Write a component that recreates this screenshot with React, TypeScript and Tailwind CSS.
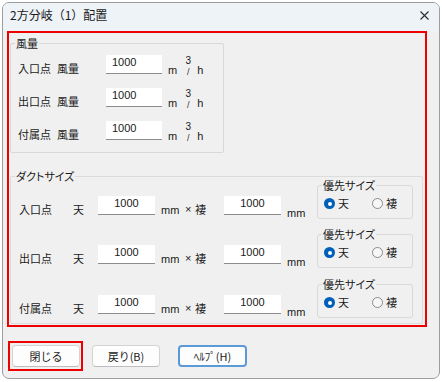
import React from "react";

const JP = "font-['Noto_Sans_CJK_JP',sans-serif]";
const LS = "font-['Liberation_Sans','Noto_Sans_CJK_JP',sans-serif]";
const PALT = "[font-feature-settings:'palt']";

function Radio({ checked }: { checked: boolean }) {
  if (checked) {
    return (
      <span className="w-[11px] h-[11px] rounded-full bg-[#005fb8] flex items-center justify-center shrink-0">
        <span className="w-[4px] h-[4px] rounded-full bg-white" />
      </span>
    );
  }
  return <span className="w-[11px] h-[11px] rounded-full border border-[#8a8a8a] bg-[#f7f7f7] shrink-0" />;
}

function Field({ value, center, className }: { value: string; center?: boolean; className?: string }) {
  return (
    <div
      className={`${LS} ${className ?? ""} h-[19px] bg-white border-b border-[#8c8c8c] text-[11px] leading-[15px] text-[#1a1a1a] ${
        center ? "text-center" : "pl-[6px]"
      }`}
    >
      {value}
    </div>
  );
}

function AirRow({ label }: { label: string }) {
  return (
    <div className="flex items-start h-[19px] pl-[7px] text-[#1a1a1a]">
      <span className={`${JP} w-[39px] mt-[6px] text-[11px] leading-[14px] shrink-0`}>{label}</span>
      <span className={`${JP} w-[49px] mt-[6px] text-[11px] leading-[14px] shrink-0`}>風量</span>
      <Field value="1000" className="w-[56px] shrink-0" />
      <span className={`${LS} ml-[6px] mt-[8px] text-[11px] leading-[14px]`}>m</span>
      <span className={`${LS} ml-[7px] mt-[1px] w-[8px] flex flex-col items-center`}>
        <span className="text-[10px] leading-[10px]">3</span>
        <span className="text-[9px] leading-[8px] mt-[2px] text-[#333333]">/</span>
      </span>
      <span className={`${LS} ml-[5px] mt-[8px] text-[11px] leading-[14px]`}>h</span>
    </div>
  );
}

function Priority() {
  return (
    <div className="relative ml-auto mr-[9px] w-[96px] h-[34px] border border-[#d9d9d9] rounded-[3px] pt-[12px] pl-[6px] flex items-start shrink-0">
      <span
        className={`${JP} ${PALT} absolute left-[4px] top-[-8px] bg-[#f0f0f0] px-[1px] text-[11px] leading-[14px] text-[#1a1a1a]`}
      >
        優先サイズ
      </span>
      <div className="w-[48px] flex items-start">
        <Radio checked />
        <span className={`${JP} ml-[3px] text-[11px] leading-[11px] text-[#1a1a1a]`}>天</span>
      </div>
      <div className="flex items-start">
        <Radio checked={false} />
        <span className={`${JP} ml-[3px] text-[11px] leading-[11px] text-[#1a1a1a]`}>褄</span>
      </div>
    </div>
  );
}

function DuctRow({ label, className }: { label: string; className?: string }) {
  return (
    <div className={`flex items-start h-[34px] pl-[8px] text-[#1a1a1a] ${className ?? ""}`}>
      <span className={`${JP} w-[54px] mt-[17px] text-[11px] leading-[14px] shrink-0`}>{label}</span>
      <span className={`${JP} w-[25px] mt-[17px] text-[11px] leading-[14px] shrink-0`}>天</span>
      <Field value="1000" center className="w-[57px] mt-[11px] shrink-0" />
      <span className={`${LS} w-[24px] ml-[6px] mt-[18px] text-[11px] leading-[14px] shrink-0`}>mm</span>
      <span className={`${LS} w-[10px] mt-[17px] text-[11px] leading-[14px] shrink-0`}>×</span>
      <span className={`${JP} w-[29px] mt-[17px] text-[11px] leading-[14px] shrink-0`}>褄</span>
      <Field value="1000" center className="w-[57px] mt-[11px] shrink-0" />
      <span className={`${LS} ml-[6px] mt-[21px] text-[11px] leading-[14px] shrink-0`}>mm</span>
      <Priority />
    </div>
  );
}

function Button({ label, className }: { label: string; className?: string }) {
  return (
    <div
      className={`${JP} h-[22px] flex items-center justify-center rounded-[4px] bg-[#fdfdfd] text-[11px] leading-[14px] text-[#1a1a1a] ${
        className ?? ""
      }`}
    >
      {label}
    </div>
  );
}

export default function App() {
  return (
    <div className="w-[442px] h-[382px] bg-white pl-[2px] pt-[2px]">
      <div className="w-[438px] h-[377px] border border-[#9d9d9d] rounded-[7px] overflow-hidden flex flex-col bg-[#f0f0f0]">
        {/* title bar */}
        <div className="h-[28px] bg-[#eef3f8] flex items-start justify-between shrink-0">
          <span className={`${JP} pl-[7px] pt-[4px] text-[12px] leading-[16px] text-[#1a1a1a]`}>2方分岐（1）配置</span>
          <svg className="mt-[8px] mr-[10px]" width="9" height="9" viewBox="0 0 9 9">
            <path d="M0.5 0.5 L8.5 8.5 M8.5 0.5 L0.5 8.5" stroke="#2b2b2b" strokeWidth="1.1" fill="none" />
          </svg>
        </div>

        {/* body */}
        <div className="flex flex-col pl-[4px]">
          <div className="w-[420px] h-[296px] border-2 border-[#ec0000] flex flex-col">
            {/* 風量 group */}
            <div className="relative ml-[1px] mt-[10px] w-[214px] h-[110px] border border-[#d9d9d9] rounded-[2px] pt-[11px] flex flex-col gap-[14px]">
              <span className={`${JP} absolute left-[4px] top-[-8px] bg-[#f0f0f0] px-[1px] text-[11px] leading-[14px] text-[#1a1a1a]`}>
                風量
              </span>
              <AirRow label="入口点" />
              <AirRow label="出口点" />
              <AirRow label="付属点" />
            </div>

            {/* ダクトサイズ group */}
            <div className="relative ml-[1px] mt-[23px] w-[413px] h-[148px] border border-[#dcdcdc] rounded-[2px] pt-[8px] flex flex-col">
              <span
                className={`${JP} ${PALT} absolute left-[4px] top-[-8px] bg-[#f0f0f0] px-[1px] text-[11px] leading-[14px] text-[#1a1a1a]`}
              >
                ダクトサイズ
              </span>
              <DuctRow label="入口点" />
              <DuctRow label="出口点" className="mt-[15px]" />
              <DuctRow label="付属点" className="mt-[16px]" />
            </div>
          </div>

          {/* buttons */}
          <div className="flex items-center mt-[14px]">
            <div className="ml-[1px] w-[75px] h-[30px] border-2 border-[#ec0000] pl-[2px] pt-[2px]">
              <Button label="閉じる" className="w-[68px] border border-[#d3d3d3] border-b-[#bdbdbd]" />
            </div>
            <Button label="戻り(B)" className="ml-[9px] w-[68px] border border-[#d3d3d3] border-b-[#bdbdbd]" />
            <Button label="ﾍﾙﾌﾟ(H)" className="ml-[18px] w-[69px] border-2 border-[#5b9ad9]" />
          </div>
        </div>
      </div>
    </div>
  );
}
